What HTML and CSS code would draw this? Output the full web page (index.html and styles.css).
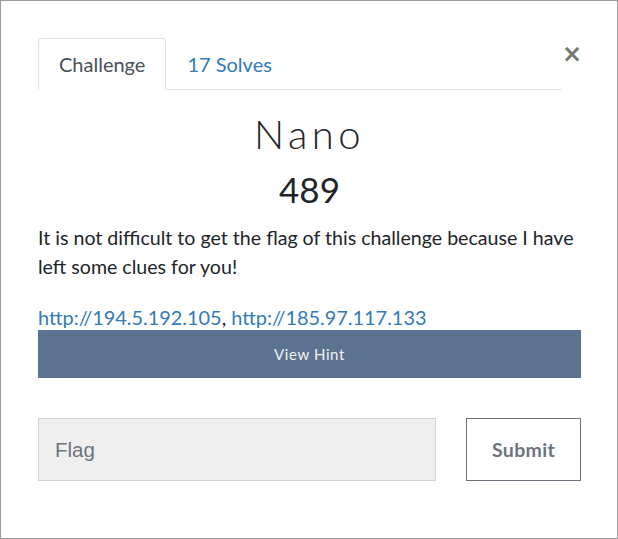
FILE: index.html
```html
<!DOCTYPE html>
<html>
<head>
<meta charset="utf-8">
<link rel="stylesheet" href="styles.css">
</head>
<body>
<div class="modal">
  <div class="header">
    <nav class="tabs">
      <a class="tab active">Challenge</a>
      <a class="tab">17 Solves</a>
    </nav>
    <span class="close">×</span>
  </div>
  <h2 class="name">Nano</h2>
  <h3 class="value">489</h3>
  <p class="desc">It is not difficult to get the flag of this challenge because I have left some clues for you!</p>
  <p class="links"><a>http://194.5.192.105</a>, <a>http://185.97.117.133</a></p>
  <div class="hint">View Hint</div>
  <div class="submit-row">
    <div class="flag">Flag</div>
    <div class="submit">Submit</div>
  </div>
</div>
</body>
</html>
```
FILE: styles.css
```css
html, body { margin: 0; padding: 0; background: #fff; }
.modal {
  box-sizing: border-box;
  width: 618px;
  height: 539px;
  border: 1px solid #9b9b9b;
  padding: 37px 36px 0 37px;
  font-family: Lato, "Open Sans", sans-serif;
  color: #212529;
}
.header { display: flex; align-items: flex-start; }
.tabs {
  display: flex;
  width: 525px;
  border-bottom: 1px solid #dee2e6;
}
.tab {
  font-size: 20px;
  line-height: 24px;
  padding: 13px 20px 13px 20px;
  border: 1px solid transparent;
  border-top-left-radius: 4px;
  border-top-right-radius: 4px;
  margin-bottom: -1px;
  color: #337ab7;
}
.tab.active {
  color: #495057;
  border-color: #dee2e6 #dee2e6 #fff;
  background: #fff;
}
.close {
  margin-left: auto;
  margin-top: 1px;
  margin-right: -1px;
  font-family: "DejaVu Sans", sans-serif;
  font-weight: bold;
  font-size: 24px;
  line-height: 30px;
  color: #777;
}
.name {
  margin: 20px 0 0;
  text-align: center;
  font-weight: 300;
  font-size: 40px;
  line-height: 48px;
  letter-spacing: 4.5px;
}
.value {
  margin: 10px 0 0;
  text-align: center;
  font-weight: 400;
  font-size: 35px;
  line-height: 42px;
}
.desc {
  margin: 13px 0 0;
  font-size: 19.6px;
  line-height: 29px;
}
.links {
  margin: 23px 0 0;
  font-size: 19.9px;
  line-height: 26px;
}
.links a { color: #337ab7; }
.hint {
  height: 48px;
  background: #5b7290;
  color: #f2f2f2;
  font-size: 15px;
  letter-spacing: 0.6px;
  display: flex;
  align-items: center;
  justify-content: center;
}
.submit-row {
  margin-top: 40px;
  display: flex;
  justify-content: space-between;
}
.flag {
  box-sizing: border-box;
  width: 398px;
  height: 63px;
  background: #efefef;
  border: 1px solid #ced4da;
  padding-left: 16px;
  display: flex;
  align-items: center;
  font-family: "Liberation Sans", Arial, sans-serif;
  font-size: 20.5px;
  color: #6c757d;
}
.submit {
  box-sizing: border-box;
  width: 115px;
  height: 63px;
  border: 1px solid #6c757d;
  display: flex;
  align-items: center;
  justify-content: center;
  font-weight: 700;
  font-size: 19.5px;
  color: #6c757d;
  letter-spacing: 0.3px;
}
```
